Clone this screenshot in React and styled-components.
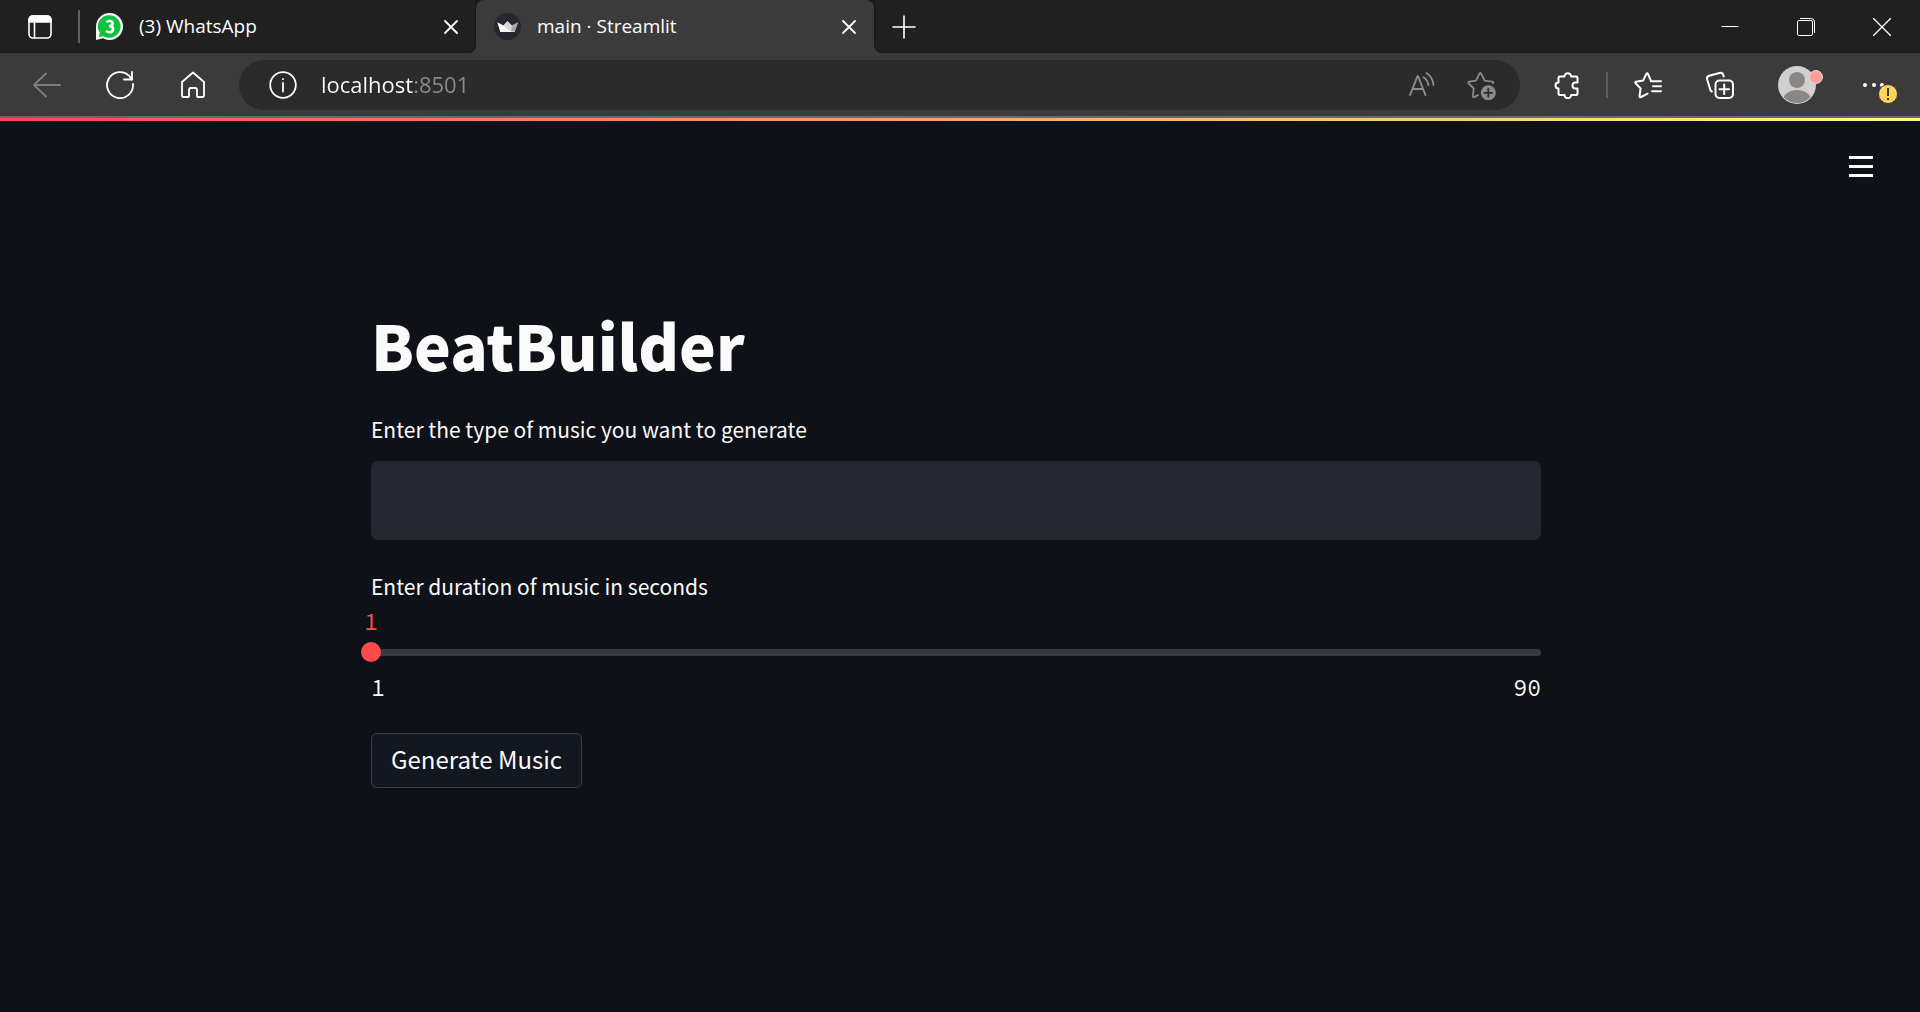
import React, { useState } from "react";
import styled, { createGlobalStyle } from "styled-components";

const chromeFont = '"Segoe UI", "Open Sans", "Noto Sans", sans-serif';
const appFont = '"Source Sans Pro", "Noto Sans CJK JP", sans-serif';
const monoFont = '"Source Code Pro", "Liberation Mono", monospace';

const GlobalStyle = createGlobalStyle`
  *, *::before, *::after { box-sizing: border-box; }
  body { margin: 0; background: #0e1117; }
  button, input { margin: 0; padding: 0; border: 0; background: none; color: inherit; font: inherit; }
  button { cursor: pointer; }
  svg { display: block; }
`;

const Window = styled.div`
  display: flex;
  flex-direction: column;
  min-height: 100vh;
  color: #fff;
  font-family: ${chromeFont};
`;

const TabStrip = styled.header`
  display: flex;
  height: 53px;
  background: #3b3b3b;
`;

const StripStart = styled.div`
  display: flex;
  align-items: center;
  width: 476px;
  padding: 0 9px 0 20px;
  background: #202020;
  border-bottom-right-radius: 8px;
  box-shadow: inset -1px -1px 0 #1a1a1a;
`;

const StripEnd = styled.div`
  display: flex;
  flex: 1;
  align-items: center;
  justify-content: space-between;
  padding-left: 10px;
  background: #202020;
  border-bottom-left-radius: 8px;
  box-shadow: inset 1px -1px 0 #1a1a1a;
`;

const ActiveSlot = styled.div`
  display: flex;
  width: 398px;
  background: linear-gradient(#1a1a1a 50%, #3b3b3b 50%);
`;

const Tab = styled.div`
  display: flex;
  flex: 1;
  align-items: center;
  height: 100%;
  padding: ${(p) => (p.$active ? "0 9px 0 18px" : "0 0 0 16px")};
  border-radius: 8px 8px 0 0;
  background: ${(p) => (p.$active ? "#3b3b3b" : "transparent")};
`;

const TabButton = styled.button`
  display: flex;
  flex: 1;
  align-items: center;
  gap: 16px;
  font-size: 19px;
  line-height: 28px;
`;

const TabTitle = styled.span`
  padding-bottom: 2px;
`;

const IconButton = styled.button`
  display: flex;
  align-items: center;
  justify-content: center;
  flex: none;
  width: ${(p) => p.$width || 32}px;
  height: 40px;
  color: ${(p) => p.$color || "#fff"};
`;

const Divider = styled.span`
  flex: none;
  width: 2px;
  height: ${(p) => p.$height}px;
  margin: ${(p) => p.$margin};
  background: #5f5f5f;
`;

const WindowControls = styled.div`
  display: flex;
`;

const Toolbar = styled.nav`
  display: flex;
  align-items: center;
  height: 65px;
  padding: 0 8px 0 10px;
  background: #3b3b3b;
  border-bottom: 2px solid #6a6a6a;
`;

const AddressBar = styled.form`
  display: flex;
  flex: 1;
  align-items: center;
  height: 50px;
  margin: 0 12px 0 10px;
  padding: 0 8px 0 24px;
  border-radius: 25px;
  background: #2b2b2b;
`;

const AddressInput = styled.input`
  flex: 1;
  min-width: 0;
  height: 40px;
  margin-left: 18px;
  padding-bottom: 2px;
  outline: none;
  font-size: 22px;
  background: linear-gradient(90deg, #fff 92px, #8c8c8c 92px);
  background-clip: text;
  -webkit-text-fill-color: transparent;
`;

const Tools = styled.div`
  display: flex;
  align-items: center;
`;

const Progress = styled.div`
  height: 3px;
  background: linear-gradient(90deg, #ff4b4b, #fffd80);
`;

const AppHeader = styled.div`
  display: flex;
  justify-content: flex-end;
  padding: 25px 39px 0 0;
`;

const Main = styled.main`
  width: 100%;
  max-width: 1178px;
  margin: 0 auto;
  padding: 116px 8px 0 0;
  color: #fafafa;
  font-family: ${appFont};
`;

const Title = styled.h1`
  margin: 0;
  font-size: 62px;
  line-height: 84px;
  font-weight: 900;
`;

const Field = styled.div`
  margin-top: ${(p) => p.$gap}px;
`;

const Label = styled.label`
  display: block;
  font-size: 21px;
  line-height: 32px;
`;

const TextInput = styled.input`
  display: block;
  width: 100%;
  height: 79px;
  margin-top: 16px;
  padding: 0 24px;
  border-radius: 7px;
  outline: none;
  background: #262730;
  font-size: 24px;
`;

const ThumbValue = styled.output`
  display: block;
  width: fit-content;
  margin-top: 6px;
  transform: translateX(-50%);
  color: #ff4b4b;
  font-family: ${monoFont};
  font-size: 23px;
  line-height: 28px;
`;

const SliderRow = styled.div`
  display: grid;
  align-items: center;
  height: 20px;
  margin-top: 6px;
  > * { grid-area: 1 / 1; }
`;

const Track = styled.div`
  height: 7px;
  border-radius: 4px;
  background: #363941;
`;

const Range = styled.input`
  width: calc(100% + 20px);
  height: 20px;
  margin: 0 -10px;
  appearance: none;
  background: transparent;
  &::-webkit-slider-thumb {
    appearance: none;
    width: 20px;
    height: 20px;
    border-radius: 50%;
    background: #ff4b4b;
  }
`;

const Ticks = styled.div`
  display: flex;
  justify-content: space-between;
  margin-top: 12px;
  font-family: ${monoFont};
  font-size: 23px;
  line-height: 28px;
`;

const GenerateButton = styled.button`
  height: 55px;
  margin-top: 31px;
  padding: 0 19px 3px;
  border: 1px solid #3d4047;
  border-radius: 6px;
  background: #131720;
  font-size: 24px;
  line-height: 36px;
`;

function Icon({ w = 28, h = 28, stroke = 2, children }) {
  return (
    <svg width={w} height={h} viewBox={`0 0 ${w} ${h}`} fill="none" stroke="currentColor" strokeWidth={stroke} strokeLinecap="round" strokeLinejoin="round" aria-hidden="true">
      {children}
    </svg>
  );
}

const TabPanelIcon = () => (
  <Icon w={24} h={24} stroke={1.6}>
    <rect x="1" y="1" width="22" height="22" rx="4" />
    <path d="M1 7V5a4 4 0 0 1 4-4h14a4 4 0 0 1 4 4v2z" fill="currentColor" />
    <path d="M6.500 8v15" />
  </Icon>
);

const CloseIcon = () => (
  <Icon w={14} h={14} stroke={1.8}>
    <path d="M1 1l12 12M13 1L1 13" />
  </Icon>
);

const WhatsAppIcon = () => (
  <svg width="27" height="27" viewBox="0 0 27 27" aria-hidden="true">
    <path d="M13.500 0A13.500 13.500 0 1 1 7 25.300L0 27V13.500A13.500 13.500 0 0 1 13.500 0z" fill="#f4f7f4" />
    <path d="M13.500 2.200A11.300 11.300 0 1 1 7.500 23.200L2.800 24l1-4.200A11.300 11.300 0 0 1 13.500 2.200z" fill="#12c143" />
    <path d="M10.500 9.300q1-1.300 3.200-1.300 2.900 0 2.900 2.600 0 2.500-3.400 2.500 3.900 0 3.900 3 0 3.100-3.600 3.100-2.200 0-3.400-1.300" fill="none" stroke="#fff" strokeWidth="2.600" />
  </svg>
);

const CrownIcon = () => (
  <svg width="27" height="27" viewBox="0 0 27 27" aria-hidden="true">
    <circle cx="13.500" cy="13.500" r="13.500" fill="#262730" />
    <path d="M3.500 9.500l5.500 3 4.500-4.500 4.500 4.500 6-3L20.500 19h-14z" fill="#d8d8d8" />
    <path d="M3.500 9.500l5.500 3 8 6.500H6.500z" fill="#fff" />
    <path d="M24 9.500l-6 3-1 6.500h3.500z" fill="#a5a5a8" />
    <path d="M9 12.500l3 6h8.500v.5h-14z" fill="#fff" />
  </svg>
);

export default function App() {
  const [seconds, setSeconds] = useState(1);
  const [prompt, setPrompt] = useState("");
  const [address, setAddress] = useState("localhost:8501");
  const offset = ((seconds - 1) / 89) * 100;

  return (
    <Window>
      <GlobalStyle />
      <TabStrip>
        <StripStart>
          <IconButton $width={40} aria-label="Tab actions"><TabPanelIcon /></IconButton>
          <Divider $height={33} $margin="0 0 0 18px" />
          <Tab>
            <TabButton type="button"><WhatsAppIcon /><TabTitle>(3) WhatsApp</TabTitle></TabButton>
            <IconButton aria-label="Close WhatsApp tab"><CloseIcon /></IconButton>
          </Tab>
        </StripStart>
        <ActiveSlot>
          <Tab $active>
            <TabButton type="button"><CrownIcon /><TabTitle>main · Streamlit</TabTitle></TabButton>
            <IconButton aria-label="Close Streamlit tab"><CloseIcon /></IconButton>
          </Tab>
        </ActiveSlot>
        <StripEnd>
          <IconButton $width={40} aria-label="New tab">
            <Icon w={24} h={24} stroke={1.6}><path d="M12 1v22M1 12h22" /></Icon>
          </IconButton>
          <WindowControls>
            <IconButton $width={76} aria-label="Minimize">
              <Icon w={18} h={18} stroke={1}><path d="M1 8.500h16" /></Icon>
            </IconButton>
            <IconButton $width={76} aria-label="Restore">
              <Icon w={18} h={18} stroke={1}>
                <rect x=".5" y="2.500" width="15" height="15" rx="1.500" />
                <path d="M3.500.5H14a3.500 3.500 0 0 1 3.500 3.500v10.500" />
              </Icon>
            </IconButton>
            <IconButton $width={76} aria-label="Close window">
              <Icon w={18} h={18} stroke={1.3}><path d="M.5.5l17 17M17.500.5l-17 17" /></Icon>
            </IconButton>
          </WindowControls>
        </StripEnd>
      </TabStrip>

      <Toolbar>
        <IconButton $width={73} $color="#7e7e7e" aria-label="Back">
          <Icon stroke={1.8}><path d="M27 14H1M13 2.500L1 14l12 11.500" /></Icon>
        </IconButton>
        <IconButton $width={73} aria-label="Refresh">
          <Icon stroke={1.8}><path d="M27 13A13 13 0 1 1 23.500 5.200L26 8.500" /><path d="M26 1v7.500h-8" /></Icon>
        </IconButton>
        <IconButton $width={73} aria-label="Home">
          <Icon stroke={1.8}><path d="M3 11L14 1.500 25 11v13.500a1.500 1.500 0 0 1-1.500 1.500H19a1 1 0 0 1-1-1v-6a2 2 0 0 0-2-2h-4a2 2 0 0 0-2 2v6a1 1 0 0 1-1 1H4.500A1.500 1.500 0 0 1 3 24.500z" /></Icon>
        </IconButton>
        <AddressBar onSubmit={(e) => e.preventDefault()}>
          <IconButton $width={40} type="button" aria-label="Site information">
            <Icon stroke={1.8}><circle cx="14" cy="14" r="12.800" /><path d="M14 12v8.500M14 8v.2" /></Icon>
          </IconButton>
          <AddressInput aria-label="Address" value={address} onChange={(e) => setAddress(e.target.value)} />
          <Tools>
            <IconButton $width={60} type="button" $color="#8c8c8c" aria-label="Read aloud">
              <Icon w={26} h={28} stroke={1.800}>
                <path d="M1 24.200L8.500 5.200h.5l7.500 19M4 18h10M14.500 6.200q4 2.500 5 8M17.500 2q6 3.500 7 12" />
              </Icon>
            </IconButton>
            <IconButton $width={60} type="button" $color="#8c8c8c" aria-label="Add to favorites">
              <Icon w={30} h={30} stroke={1.800}>
                <path d="M26 13.300q.8-1.300-1-1.600l-7.300-1.100-3.500-7q-.8-1.300-1.700 0l-3.500 7-6.800 1.100q-1.600.4-.6 1.600l5.200 5.200L5.800 26q0 1.700 1.500 1.100L11 25" />
                <circle cx="21.300" cy="22.800" r="7.500" fill="currentColor" stroke="none" />
                <path d="M21.300 18.800v8M17.300 22.800h8" stroke="#2b2b2b" />
              </Icon>
            </IconButton>
          </Tools>
        </AddressBar>
        <Tools>
          <IconButton $width={70} aria-label="Extensions">
            <Icon><path d="M7 5.500h4.500a3.300 3.300 0 0 1 6.600 0H23A1.500 1.500 0 0 1 24.500 7v4.500h-2a3 3 0 0 0 0 6h2V22.500a1.500 1.500 0 0 1-1.500 1.500h-4.900a3.300 3.300 0 0 1-6.600 0H7a1.500 1.500 0 0 1-1.500-1.500v-5a3 3 0 0 1 0-6V7A1.500 1.500 0 0 1 7 5.500z" /></Icon>
          </IconButton>
          <Divider $height={26} $margin="0 0 0 4px" />
          <IconButton $width={80} aria-label="Favorites">
            <Icon><path d="M17 9.800L14 3q-.8-1.300-1.700 0L9.100 9.600l-7 1.100q-1.600.4-.6 1.600l5.100 5.100L5.500 25q0 1.700 1.500 1l6.500-3.300M17 10.300h10M19 15.300h8M18 20.300h9" /></Icon>
          </IconButton>
          <IconButton $width={64} aria-label="Collections">
            <Icon>
              <rect x="9.500" y="9.500" width="17.500" height="17.500" rx="4" />
              <path d="M18.200 13.500v9.500M13.500 18.200h9.500M5.800 20.500q-1.200-.5-1.600-2L1.200 8.500q-.8-3 2-3.800L13.500 2q3-.8 4 2.500l.2 1" />
            </Icon>
          </IconButton>
          <IconButton $width={96} aria-label="Profile">
            <svg width="48" height="40" viewBox="0 0 48 40" aria-hidden="true">
              <defs><clipPath id="avatar"><circle cx="21" cy="20" r="18" /></clipPath></defs>
              <circle cx="21" cy="20" r="19" fill="#d2d0ce" />
              <circle cx="21" cy="15" r="8" fill="#8a8886" />
              <ellipse cx="21" cy="35" rx="14" ry="10" fill="#8a8886" clipPath="url(#avatar)" />
              <circle cx="40" cy="12" r="6.500" fill="#ff9f9b" stroke="#e6d9d6" />
            </svg>
          </IconButton>
          <IconButton $width={64} aria-label="Settings, update available">
            <svg width="36" height="40" viewBox="0 0 36 40" fill="#fff" aria-hidden="true">
              <circle cx="3" cy="20" r="2" /><circle cx="12" cy="20" r="2" /><circle cx="20" cy="20" r="2" />
              <circle cx="26" cy="29" r="9.500" fill="#ffd35c" stroke="#3b3b3b" />
              <path d="M26 23v8M26 33v2" stroke="#3b3b3b" strokeWidth="2" />
            </svg>
          </IconButton>
        </Tools>
      </Toolbar>
      <Progress />

      <AppHeader>
        <IconButton $width={40} aria-label="Menu">
          <svg width="24" height="21" viewBox="0 0 24 21" fill="#fff" aria-hidden="true"><path d="M0 0h24v3H0zM0 9h24v3H0zM0 18h24v3H0z" /></svg>
        </IconButton>
      </AppHeader>
      <Main>
        <Title>BeatBuilder</Title>
        <Field $gap={27}>
          <Label htmlFor="prompt">Enter the type of music you want to generate</Label>
          <TextInput id="prompt" value={prompt} onChange={(e) => setPrompt(e.target.value)} />
        </Field>
        <Field $gap={30}>
          <Label htmlFor="duration">Enter duration of music in seconds</Label>
          <ThumbValue htmlFor="duration" style={{ marginLeft: `${offset}%` }}>{seconds}</ThumbValue>
          <SliderRow>
            <Track />
            <Range id="duration" type="range" min="1" max="90" value={seconds} onChange={(e) => setSeconds(Number(e.target.value))} />
          </SliderRow>
          <Ticks><span>1</span><span>90</span></Ticks>
        </Field>
        <GenerateButton type="button">Generate Music</GenerateButton>
      </Main>
    </Window>
  );
}
